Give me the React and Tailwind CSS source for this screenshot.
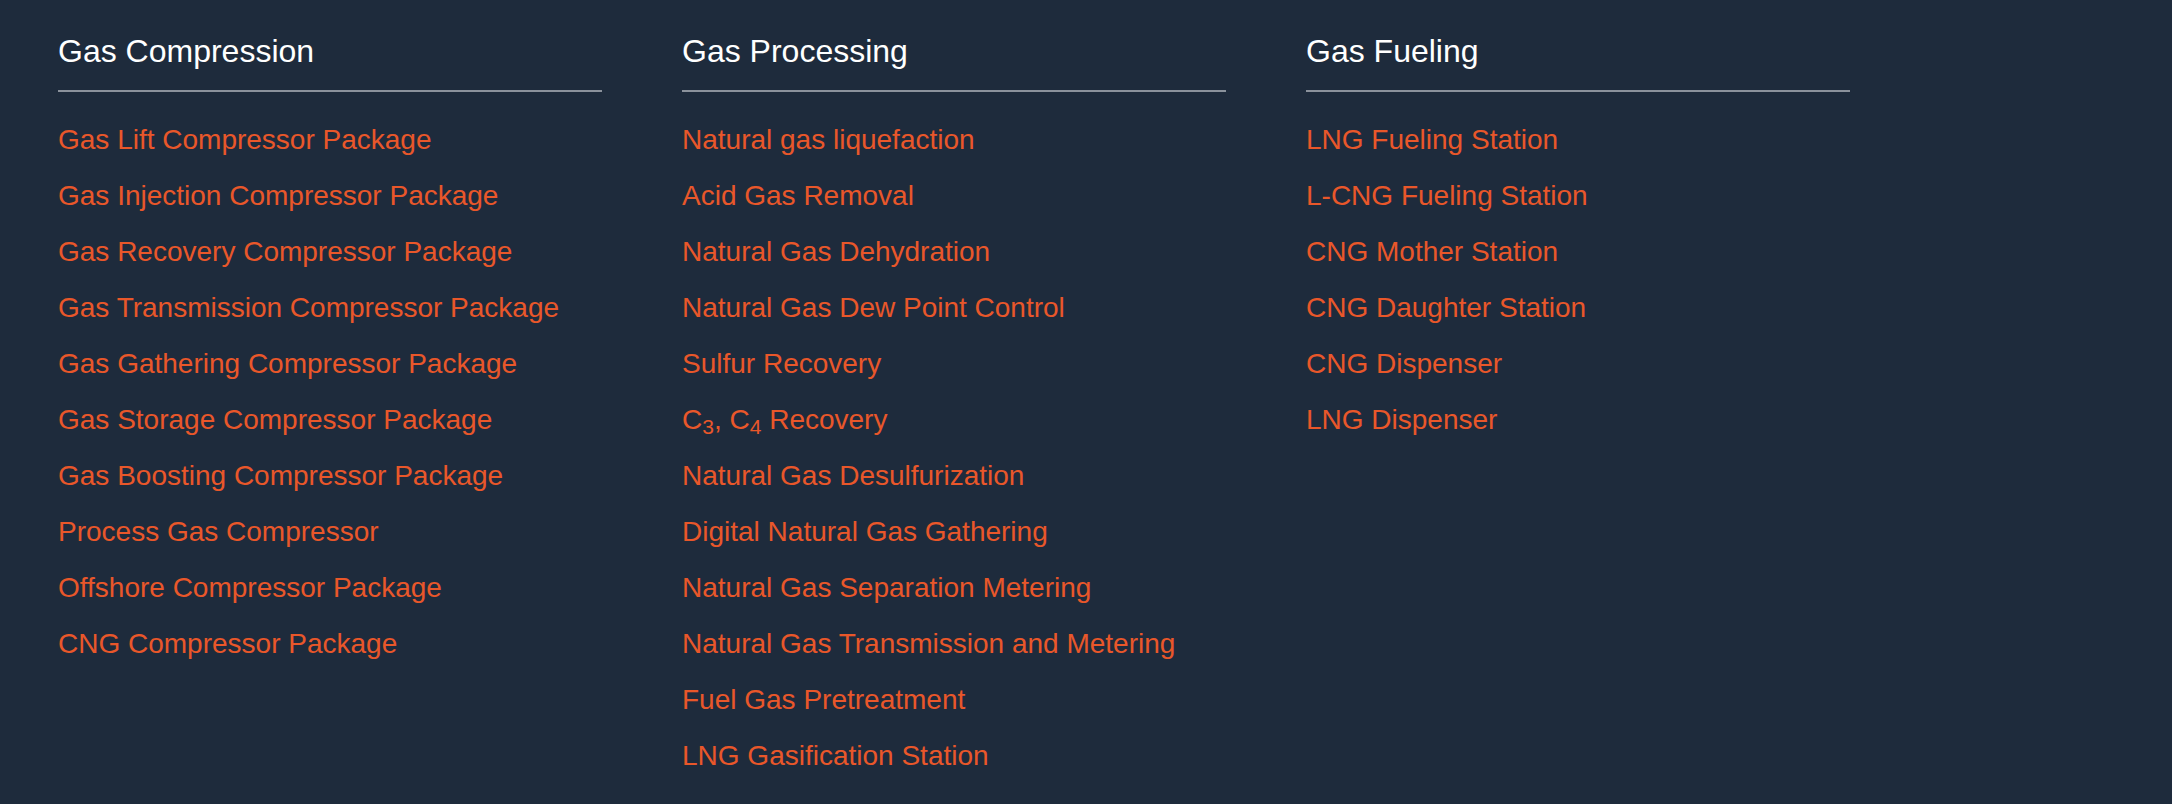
import React from 'react';

const columns = [
  {
    title: 'Gas Compression',
    items: [
      'Gas Lift Compressor Package',
      'Gas Injection Compressor Package',
      'Gas Recovery Compressor Package',
      'Gas Transmission Compressor Package',
      'Gas Gathering Compressor Package',
      'Gas Storage Compressor Package',
      'Gas Boosting Compressor Package',
      'Process Gas Compressor',
      'Offshore Compressor Package',
      'CNG Compressor Package',
    ],
  },
  {
    title: 'Gas Processing',
    items: [
      'Natural gas liquefaction',
      'Acid Gas Removal',
      'Natural Gas Dehydration',
      'Natural Gas Dew Point Control',
      'Sulfur Recovery',
      'C34',
      'Natural Gas Desulfurization',
      'Digital Natural Gas Gathering',
      'Natural Gas Separation Metering',
      'Natural Gas Transmission and Metering',
      'Fuel Gas Pretreatment',
      'LNG Gasification Station',
    ],
  },
  {
    title: 'Gas Fueling',
    items: [
      'LNG Fueling Station',
      'L-CNG Fueling Station',
      'CNG Mother Station',
      'CNG Daughter Station',
      'CNG Dispenser',
      'LNG Dispenser',
    ],
  },
];

function ItemLabel({ text }) {
  // the C3/C4 entry needs real subscripts
  if (text === 'C34') {
    return (
      <>
        C<sub>3</sub>, C<sub>4</sub> Recovery
      </>
    );
  }
  return text;
}

export default function App() {
  return (
    <div
      className="min-h-screen w-full bg-[#1e2b3c] pl-[58px] pt-[31px]"
      style={{ fontFamily: '"Liberation Sans", Arial, sans-serif' }}
    >
      <div className="flex gap-[80px]">
        {columns.map((col) => (
          <div key={col.title} className="w-[544px]">
            <h3 className="text-[32px] leading-[40px] font-normal text-white pb-[19px] border-b-2 border-[#8b929c]">
              {col.title}
            </h3>
            <ul className="mt-[20px]">
              {col.items.map((item) => (
                <li key={item} className="text-[28px] leading-[56px] text-[#e9572a]">
                  <a href="#" className="hover:underline">
                    <ItemLabel text={item} />
                  </a>
                </li>
              ))}
            </ul>
          </div>
        ))}
      </div>
    </div>
  );
}
